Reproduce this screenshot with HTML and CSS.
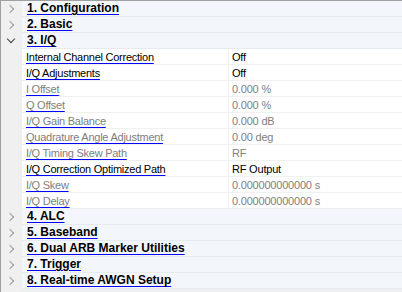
FILE: index.html
```html
<!DOCTYPE html>
<html>
<head>
<meta name="viewport" content="width=device-width, initial-scale=1">
<link rel="stylesheet" href="styles.css">
</head>
<body>

<div class="grid">

  <div class="row cat"><div class="gutter"><span class="chev"></span></div><div class="catName"><span class="link">1. Configuration</span></div></div>
  <div class="row cat"><div class="gutter"><span class="chev"></span></div><div class="catName"><span class="link">2. Basic</span></div></div>
  <div class="row cat"><div class="gutter"><span class="chev open"></span></div><div class="catName"><span class="link">3. I/Q</span></div></div>

  <div class="row prop"><div class="gutter"></div><div class="name"><span class="link">Internal Channel Correction</span></div><div class="value">Off</div></div>
  <div class="row prop"><div class="gutter"></div><div class="name"><span class="link">I/Q Adjustments</span></div><div class="value">Off</div></div>
  <div class="row prop dim"><div class="gutter"></div><div class="name"><span class="link">I Offset</span></div><div class="value">0.000 %</div></div>
  <div class="row prop dim"><div class="gutter"></div><div class="name"><span class="link">Q Offset</span></div><div class="value">0.000 %</div></div>
  <div class="row prop dim"><div class="gutter"></div><div class="name"><span class="link">I/Q Gain Balance</span></div><div class="value">0.000 dB</div></div>
  <div class="row prop dim"><div class="gutter"></div><div class="name"><span class="link">Quadrature Angle Adjustment</span></div><div class="value">0.00 deg</div></div>
  <div class="row prop dim"><div class="gutter"></div><div class="name"><span class="link">I/Q Timing Skew Path</span></div><div class="value">RF</div></div>
  <div class="row prop"><div class="gutter"></div><div class="name"><span class="link">I/Q Correction Optimized Path</span></div><div class="value">RF Output</div></div>
  <div class="row prop dim"><div class="gutter"></div><div class="name"><span class="link">I/Q Skew</span></div><div class="value">0.000000000000 s</div></div>
  <div class="row prop dim"><div class="gutter"></div><div class="name"><span class="link">I/Q Delay</span></div><div class="value">0.000000000000 s</div></div>

  <div class="row cat"><div class="gutter"><span class="chev"></span></div><div class="catName"><span class="link">4. ALC</span></div></div>
  <div class="row cat"><div class="gutter"><span class="chev"></span></div><div class="catName"><span class="link">5. Baseband</span></div></div>
  <div class="row cat"><div class="gutter"><span class="chev"></span></div><div class="catName"><span class="link">6. Dual ARB Marker Utilities</span></div></div>
  <div class="row cat"><div class="gutter"><span class="chev"></span></div><div class="catName"><span class="link">7. Trigger</span></div></div>
  <div class="row cat"><div class="gutter"><span class="chev"></span></div><div class="catName"><span class="link">8. Real-time AWGN Setup</span></div></div>

</div>

</body>
</html>
```

FILE: styles.css
```css
body {
  margin: 0;
  background: #ffffff;
  font-family: "Liberation Sans", Arial, sans-serif;
  font-size: 11px;
  color: #000000;
}

.grid {
  border-top: 1px solid #a0a0a0;
  border-left: 1px solid #a0a0a0;
  height: 291px;
  background: #f0f0f0;
}

.row {
  display: flex;
  height: 16px;
}

.gutter {
  width: 21px;
  flex: none;
  background: #f0f0f0;
  display: flex;
  align-items: center;
  justify-content: center;
}

.chev {
  width: 5px;
  height: 5px;
  border-right: 1.5px solid #9a9a9a;
  border-bottom: 1.5px solid #9a9a9a;
  transform: rotate(-45deg);
  margin-left: -4px;
}

.chev.open {
  border-color: #404040;
  transform: rotate(45deg);
  margin-top: -4px;
  margin-left: -2px;
}

.link {
  text-decoration: underline;
  text-decoration-color: #0000ff;
  text-underline-offset: 2px;
}

.cat .catName {
  flex: 1;
  background: #f3f6fb;
  border-bottom: 1px solid #e6ebf2;
  box-sizing: border-box;
  padding-left: 5px;
  font-weight: bold;
  font-size: 12px;
  line-height: 15px;
}

.prop .name {
  width: 207px;
  flex: none;
  background: #ffffff;
  border-bottom: 1px solid #f0f0f0;
  border-right: 1px solid #f0f0f0;
  box-sizing: border-box;
  padding: 1px 0 0 4px;
  letter-spacing: -0.25px;
  line-height: 14px;
}

.prop .value {
  flex: 1;
  background: #ffffff;
  border-bottom: 1px solid #f0f0f0;
  box-sizing: border-box;
  padding: 1px 0 0 3px;
  letter-spacing: -0.2px;
  line-height: 14px;
}

.dim .name,
.dim .value {
  color: #808080;
}
```
